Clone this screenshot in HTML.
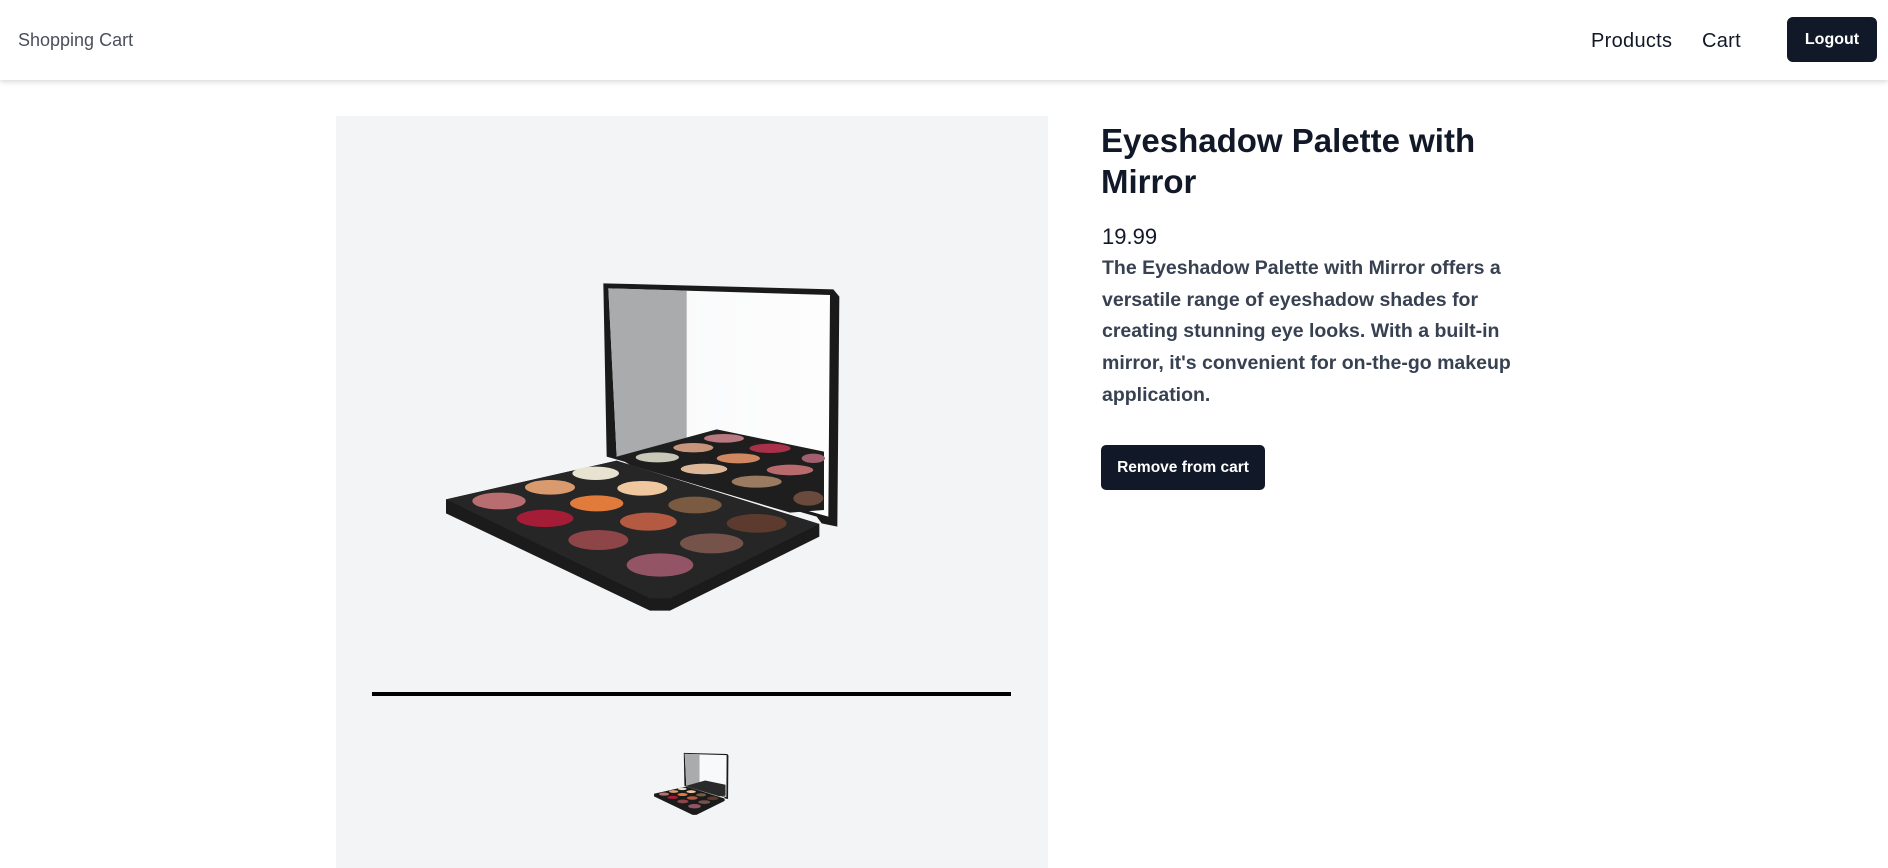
<!DOCTYPE html>
<html><head><meta charset="utf-8"><style>
*{margin:0;padding:0;box-sizing:border-box}
body{width:1888px;height:868px;overflow:hidden;background:#fff;font-family:"Liberation Sans",sans-serif;position:relative}
.hdr{position:absolute;left:0;top:0;width:1888px;height:80px;background:#fff;box-shadow:0 2px 5px rgba(0,0,0,.15);z-index:2}
.brand{position:absolute;left:18px;top:30px;font-size:18px;color:#4b4f5c}
.nav{position:absolute;top:30px;font-size:20px;color:#111827;letter-spacing:.3px}
.logout{position:absolute;left:1787px;top:17px;width:90px;height:45px;background:#111827;color:#fff;border-radius:6px;font-weight:bold;font-size:16px;text-align:center;line-height:45px}
.panel{position:absolute;left:336px;top:116px;width:712px;height:752px;background:#f3f4f6}
.line{position:absolute;left:372px;top:692px;width:639px;height:4px;background:#000}
h1{position:absolute;left:1101px;top:120px;width:430px;font-size:33px;line-height:41px;color:#111827;font-weight:bold}
.price{position:absolute;left:1102px;top:224px;font-size:22px;color:#111827}
.desc{position:absolute;left:1102px;top:253px;width:440px;font-size:19.5px;line-height:31.7px;font-weight:bold;color:#374151}
.btn{position:absolute;left:1101px;top:445px;width:164px;height:45px;background:#111827;color:#fff;border-radius:5px;font-weight:bold;font-size:15.5px;text-align:center;line-height:45px}
svg{position:absolute}
</style></head><body>
<div class="hdr">
<div class="brand">Shopping Cart</div>
<div class="nav" style="left:1591px">Products</div>
<div class="nav" style="left:1702px">Cart</div>
<div class="logout">Logout</div>
</div>
<div class="panel"></div>
<div class="line"></div>
<svg id="pal" style="left:430px;top:270px" width="460" height="350" viewBox="0 0 1380 1050">
<defs><linearGradient id="g" x1="0" x2="1"><stop offset="0" stop-color="#f8f9fa"/><stop offset="1" stop-color="#fdfdfd"/></linearGradient></defs>
<polygon points="520,40 1210,58 1228,80 1222,770 1175,760 1160,740 530,560" fill="#1a1a1a"/>
<polygon points="535,55 1200,75 1195,740 560,560" fill="url(#g)"/>
<polygon points="535,55 770,62 770,520 560,560" fill="#a9abad"/>
<polygon points="560,560 860,478 1182,545 1182,720 1080,728 600,585" fill="#1e1e1e"/>
<g>
<ellipse cx="682" cy="562" rx="65" ry="15" fill="#c9c7b8"/><ellipse cx="790" cy="533" rx="60" ry="14" fill="#c8957a"/><ellipse cx="882" cy="505" rx="60" ry="13" fill="#b87a80"/><ellipse cx="822" cy="597" rx="70" ry="16" fill="#dcb898"/><ellipse cx="925" cy="565" rx="65" ry="15" fill="#d08860"/><ellipse cx="1020" cy="535" rx="62" ry="14" fill="#a83048"/><ellipse cx="980" cy="635" rx="75" ry="18" fill="#9a7a60"/><ellipse cx="1080" cy="600" rx="70" ry="16" fill="#b86a6c"/><ellipse cx="1150" cy="565" rx="35" ry="14" fill="#a06070"/><ellipse cx="1135" cy="685" rx="45" ry="22" fill="#6a4a3c"/>
</g>
<polygon points="48,688 560,572 1168,762 1168,800 720,1022 660,1022 48,730" fill="#1b1b1b"/>
<polygon points="48,688 560,572 1168,762 720,985 660,985" fill="#262626"/>
<ellipse cx="207" cy="693" rx="80" ry="25" fill="#b86d70"/><ellipse cx="360" cy="652" rx="75" ry="22" fill="#d99a6e"/><ellipse cx="497" cy="610" rx="70" ry="20" fill="#e8e2d0"/><ellipse cx="345" cy="745" rx="85" ry="26" fill="#a51c36"/><ellipse cx="500" cy="700" rx="80" ry="24" fill="#e07b3c"/><ellipse cx="637" cy="655" rx="75" ry="22" fill="#f0c8a0"/><ellipse cx="505" cy="810" rx="90" ry="30" fill="#8e4548"/><ellipse cx="655" cy="755" rx="85" ry="27" fill="#b45a42"/><ellipse cx="795" cy="705" rx="80" ry="25" fill="#7a5a40"/><ellipse cx="690" cy="885" rx="100" ry="35" fill="#935566"/><ellipse cx="845" cy="820" rx="95" ry="30" fill="#75524a"/><ellipse cx="980" cy="760" rx="90" ry="28" fill="#5c3b2e"/>
</svg>
<svg style="left:651px;top:750px" width="87" height="67" viewBox="0 0 1380 1050">
<polygon points="520,40 1210,58 1228,80 1222,770 1175,760 1160,740 530,560" fill="#1a1a1a"/>
<polygon points="535,55 1200,75 1195,740 560,560" fill="#f8f9fa"/>
<polygon points="535,55 770,62 770,520 560,560" fill="#a9abad"/>
<polygon points="560,560 860,478 1182,545 1182,720 1080,728 600,585" fill="#2a2a2a"/>
<polygon points="48,688 560,572 1168,762 1168,800 720,1022 660,1022 48,730" fill="#1b1b1b"/>
<ellipse cx="207" cy="693" rx="80" ry="25" fill="#b86d70"/><ellipse cx="360" cy="652" rx="75" ry="22" fill="#d99a6e"/><ellipse cx="497" cy="610" rx="70" ry="20" fill="#e8e2d0"/><ellipse cx="345" cy="745" rx="85" ry="26" fill="#a51c36"/><ellipse cx="500" cy="700" rx="80" ry="24" fill="#e07b3c"/><ellipse cx="637" cy="655" rx="75" ry="22" fill="#f0c8a0"/><ellipse cx="505" cy="810" rx="90" ry="30" fill="#8e4548"/><ellipse cx="655" cy="755" rx="85" ry="27" fill="#b45a42"/><ellipse cx="795" cy="705" rx="80" ry="25" fill="#7a5a40"/><ellipse cx="690" cy="885" rx="100" ry="35" fill="#935566"/><ellipse cx="845" cy="820" rx="95" ry="30" fill="#75524a"/><ellipse cx="980" cy="760" rx="90" ry="28" fill="#5c3b2e"/>
</svg>
<h1>Eyeshadow Palette with Mirror</h1>
<div class="price">19.99</div>
<div class="desc">The Eyeshadow Palette with Mirror offers a versatile range of eyeshadow shades for creating stunning eye looks. With a built-in mirror, it's convenient for on-the-go makeup application.</div>
<div class="btn">Remove from cart</div>
</body></html>
